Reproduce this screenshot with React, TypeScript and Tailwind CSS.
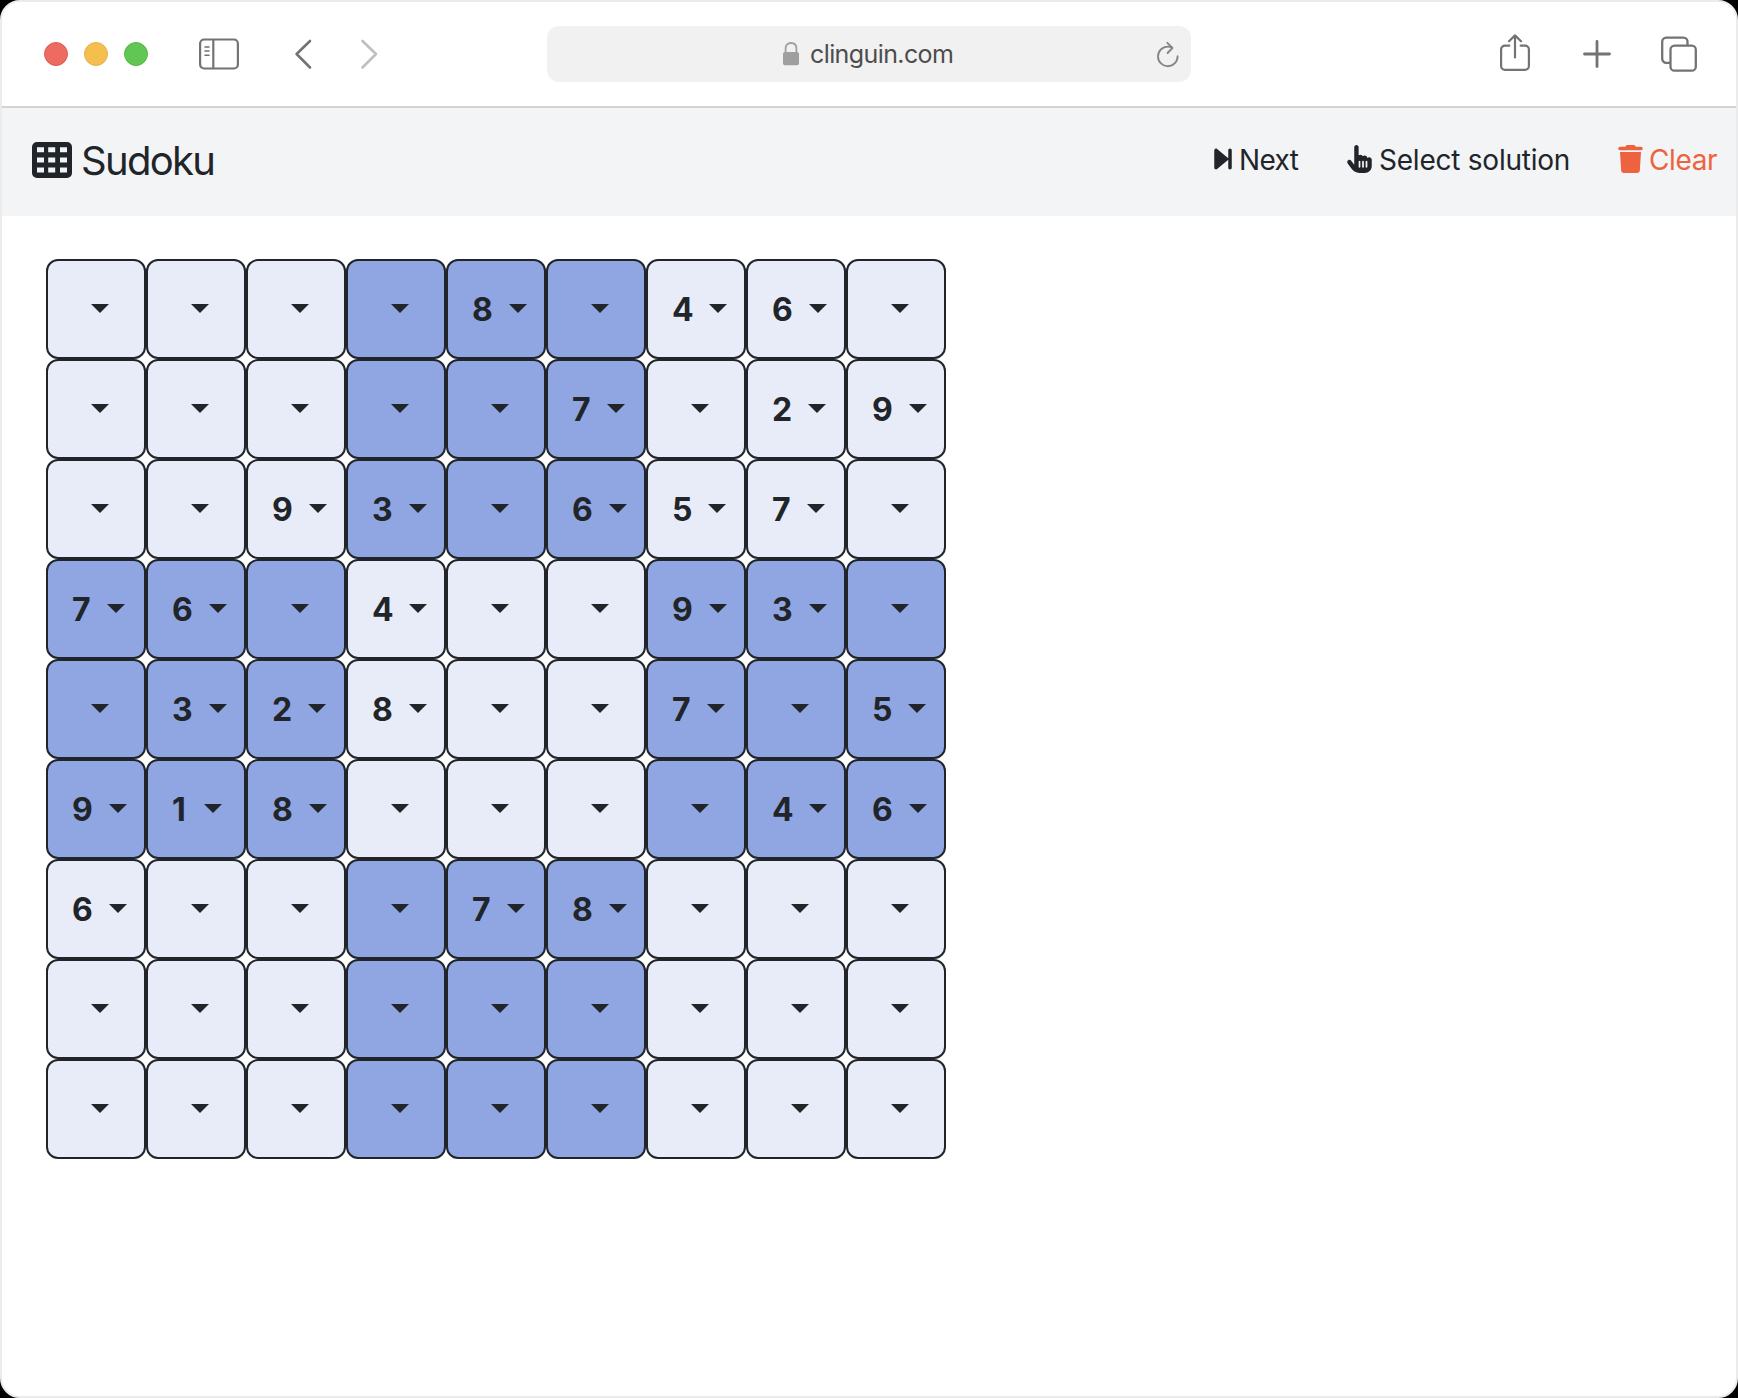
import React from "react";
import { FaForwardStep, FaHandPointer, FaTrash } from "react-icons/fa6";

const puzzle = [
  "....8.46.",
  ".....7.29",
  "..93.657.",
  "76.4..93.",
  ".328..7.5",
  "918....46",
  "6...78...",
  ".........",
  ".........",
];

const digitWidth: Record<string, string> = {
  "1": "w-[17px]",
  "2": "w-[21px]",
  "3": "w-[22px]",
  "4": "w-[22px]",
  "5": "w-[21px]",
  "6": "w-[22px]",
  "7": "w-[20px]",
  "8": "w-[22px]",
  "9": "w-[22px]",
};

function Cell({ value, shaded }: { value: string; shaded: boolean }) {
  const empty = value === ".";
  return (
    <button
      className={`flex h-[100px] w-[100px] items-start rounded-[12px] border-2 border-[#212529] pl-6 ${
        shaded ? "bg-[#8fa6e2]" : "bg-[#e8ecf8]"
      }`}
    >
      {!empty && (
        <span className={`mt-[25px] text-left text-[32px] leading-[48px] font-bold whitespace-nowrap ${digitWidth[value]}`}>
          {value}
        </span>
      )}
      <svg
        className={`mt-[43px] h-[9px] w-[18px] ${empty ? "ml-[19px]" : "ml-[15px]"}`}
        viewBox="0 0 18 9"
        fill="#212529"
      >
        <path d="M0 0H18L9 9Z" />
      </svg>
    </button>
  );
}

function BrowserBar() {
  return (
    <div className="flex h-[106px] shrink-0 items-start border-b-2 border-[#d2d3d5] bg-white text-[#737373]">
      <div className="mt-10 ml-[42px] flex gap-4">
        <span className="h-6 w-6 rounded-full border border-[#dd5f54] bg-[#ed6b60]" />
        <span className="h-6 w-6 rounded-full border border-[#e6b04c] bg-[#f5bf4f]" />
        <span className="h-6 w-6 rounded-full border border-[#58b648] bg-[#62c655]" />
      </div>
      <svg className="mt-9 ml-[51px] h-8 w-10" viewBox="0 0 40 32" fill="none" stroke="currentColor" strokeWidth="2.2">
        <rect x="1.1" y="1.5" width="37.8" height="29" rx="4" />
        <path d="M14.3 1.5V30.5" />
        <path d="M6 9H10M6 13H10M6 17.3H10" strokeWidth="1.6" strokeLinecap="round" />
      </svg>
      <svg
        className="mt-[38px] ml-14 h-[29px] w-[17px] overflow-visible"
        viewBox="0 0 17 29"
        fill="none"
        stroke="currentColor"
        strokeWidth="2.6"
        strokeLinecap="round"
        strokeLinejoin="round"
      >
        <path d="M15 1L1.6 14L15 27.5" />
      </svg>
      <svg
        className="mt-[38px] ml-[49px] h-[29px] w-[17px] overflow-visible text-[#bfbfbf]"
        viewBox="0 0 17 29"
        fill="none"
        stroke="currentColor"
        strokeWidth="2.6"
        strokeLinecap="round"
        strokeLinejoin="round"
      >
        <path d="M1.5 1L15 14L1.5 27.5" />
      </svg>
      <div className="mt-6 ml-[169px] flex h-14 w-[644px] items-start rounded-[12px] bg-[#f1f1f1]">
        <svg className="mt-4 ml-[236px] h-6 w-4" viewBox="0 0 16 24" fill="none">
          <path d="M2.6 11V6.5C2.6 3 4.8 1 8 1S13.4 3 13.4 6.5V11" stroke="#9f9f9f" strokeWidth="1.8" />
          <rect x="0" y="10" width="16" height="13.2" rx="2" fill="#9f9f9f" />
        </svg>
        <div className="mt-[9px] ml-[11px] w-[144px] text-[25px] leading-[38px] tracking-[-0.6px] whitespace-nowrap text-[#4d4d4d]">
          clinguin.com
        </div>
        <svg
          className="mt-[15px] ml-[203px] h-7 w-[22px]"
          viewBox="0 0 22 28"
          fill="none"
          stroke="#868686"
          strokeWidth="1.9"
          strokeLinecap="round"
          strokeLinejoin="round"
        >
          <path d="M14.6 6.3C13.4 5.8 12.2 5.6 10.8 5.6A9.8 9.8 0 1 0 20.6 15.2" />
          <path d="M10.4 1.8L15.4 7L10.6 12" />
        </svg>
      </div>
      <svg
        className="mt-8 ml-[309px] h-[38px] w-[30px]"
        viewBox="0 0 30 38"
        fill="none"
        stroke="currentColor"
        strokeWidth="2.2"
        strokeLinecap="round"
        strokeLinejoin="round"
      >
        <path d="M9.3 11.7H5A3.9 3.9 0 0 0 1.1 15.6V32A3.9 3.9 0 0 0 5 35.9H25A3.9 3.9 0 0 0 28.9 32V15.6A3.9 3.9 0 0 0 25 11.7H20.7" />
        <path d="M15 23.5V1.4M9 7.2L15 1.4L21 7.2" />
      </svg>
      <svg
        className="mt-[38px] ml-[53px] h-7 w-7"
        viewBox="0 0 28 28"
        stroke="currentColor"
        strokeWidth="2.8"
        strokeLinecap="round"
      >
        <path d="M14 1.5V26.5M1.5 14H26.5" />
      </svg>
      <svg className="mt-[34px] ml-[50px] h-9 w-9" viewBox="0 0 36 36" fill="none" stroke="currentColor" strokeWidth="2.3">
        <path d="M9.5 26.8H5.2A4 4 0 0 1 1.2 22.8V5.6A4 4 0 0 1 5.2 1.6H22.5A4 4 0 0 1 26.5 5.6V10" />
        <rect x="9.5" y="9.7" width="25.3" height="25" rx="4" />
      </svg>
    </div>
  );
}

function AppHeader() {
  return (
    <div className="flex h-[108px] shrink-0 items-start bg-[#f3f4f6] text-[#212529]">
      <svg className="mt-[34px] ml-[30px] h-9 w-10" viewBox="0 0 40 36">
        <path
          fill="currentColor"
          fillRule="evenodd"
          d="M5 0H35A5 5 0 0 1 40 5V31A5 5 0 0 1 35 36H5A5 5 0 0 1 0 31V5A5 5 0 0 1 5 0ZM5 5.3V10.3H12V5.3ZM16.2 5.3V10.3H23.2V5.3ZM28 5.3V10.3H35V5.3ZM5 15.5V20.5H12V15.5ZM16.2 15.5V20.5H23.2V15.5ZM28 15.5V20.5H35V15.5ZM5 25.5V30.5H12V25.5ZM16.2 25.5V30.5H23.2V25.5ZM28 25.5V30.5H35V25.5Z"
        />
      </svg>
      <div className="mt-[23px] ml-[9px] w-[140px] text-[40px] leading-[60px] tracking-[-1.7px]">Sudoku</div>
      <div className="mt-8 ml-[993px] flex text-[28px] leading-10">
        <div className="flex w-[133px]">
          <FaForwardStep className="mt-[5px] h-7 w-[18px]" />
          <span className="ml-[7px] tracking-[-0.6px] whitespace-nowrap">Next</span>
        </div>
        <div className="flex w-[271px]">
          <FaHandPointer className="mt-[5px] h-7 w-[25px]" />
          <span className="ml-[7px] tracking-[-0.23px] whitespace-nowrap">Select solution</span>
        </div>
        <div className="flex text-[#ed6340]">
          <FaTrash className="mt-[5px] h-7 w-[25px]" />
          <span className="ml-[6px] tracking-[-0.4px] whitespace-nowrap">Clear</span>
        </div>
      </div>
    </div>
  );
}

export default function App() {
  return (
    <div className="h-[1398px] w-[1738px] overflow-hidden bg-black font-['Inter',sans-serif]">
      <div className="flex h-full w-full flex-col overflow-hidden rounded-[20px] border-2 border-[#ebebeb] bg-white">
        <BrowserBar />
        <AppHeader />
        <div className="mt-[43px] ml-11 grid w-[900px] grid-cols-9 text-[#212529]">
          {puzzle.flatMap((row, r) =>
            row.split("").map((value, c) => (
              <Cell
                key={`${r}-${c}`}
                value={value}
                shaded={(Math.floor(r / 3) + Math.floor(c / 3)) % 2 === 1}
              />
            ))
          )}
        </div>
      </div>
    </div>
  );
}
